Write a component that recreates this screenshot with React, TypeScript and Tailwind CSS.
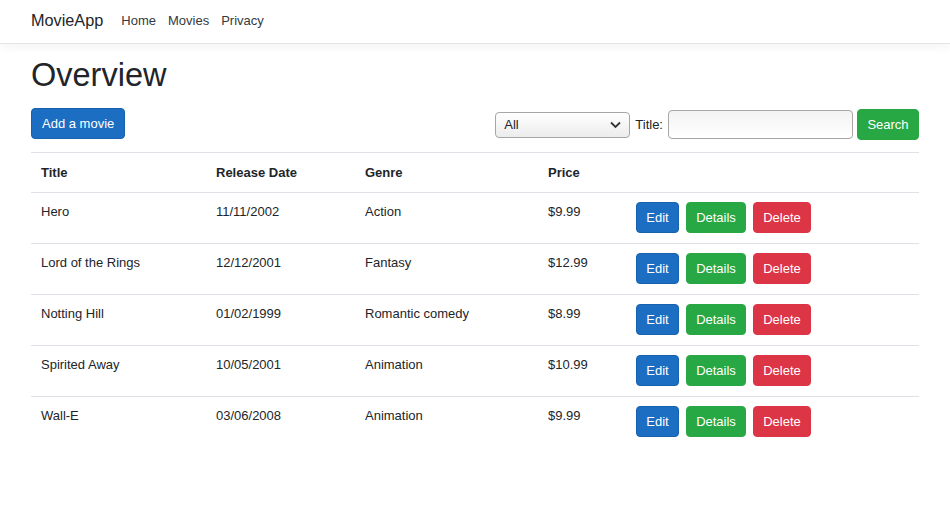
import React from "react";

const movies = [
  { title: "Hero", date: "11/11/2002", genre: "Action", price: "$9.99" },
  { title: "Lord of the Rings", date: "12/12/2001", genre: "Fantasy", price: "$12.99" },
  { title: "Notting Hill", date: "01/02/1999", genre: "Romantic comedy", price: "$8.99" },
  { title: "Spirited Away", date: "10/05/2001", genre: "Animation", price: "$10.99" },
  { title: "Wall-E", date: "03/06/2008", genre: "Animation", price: "$9.99" },
];

const grid = "grid grid-cols-[175px_149px_183px_88px_1fr]";

export default function App() {
  return (
    <div className="min-h-[511px] bg-white text-[#212529] font-['Liberation_Sans',Arial,sans-serif] text-[13px] leading-[19.5px]">
      <nav className="h-[44px] border-b border-[#e5e5e5] shadow-[0_3px_10px_rgba(0,0,0,0.05)] flex items-center pb-[1px] px-[31px]">
        <span className="text-[16.25px] text-[#212529] mr-[12px]">MovieApp</span>
        <a className="px-[6px] text-[#343a40]">Home</a>
        <a className="px-[6px] text-[#343a40]">Movies</a>
        <a className="px-[6px] text-[#343a40]">Privacy</a>
      </nav>
      <main className="px-[31px]">
        <h1 className="text-[32.5px] leading-[39px] mt-[12px] font-normal">Overview</h1>
        <div className="flex justify-between items-start mt-[13px]">
          <button className="h-[31px] px-[10px] rounded-[4px] bg-[#1b6ec2] border border-[#1861ac] text-white">
            Add a movie
          </button>
          <div className="flex items-center pt-[1px]">
            <div className="relative">
              <select className="appearance-none w-[135px] h-[26px] pl-[8px] rounded-[4px] border border-[#a6a6a6] bg-gradient-to-b from-white to-[#ececec] text-[13px] text-[#212529] outline-none">
                <option>All</option>
              </select>
              <svg className="absolute right-[9px] top-[9px] pointer-events-none" width="11" height="8" viewBox="0 0 11 8">
                <path d="M1 1.5 L5.5 6 L10 1.5" fill="none" stroke="#333" strokeWidth="1.8" />
              </svg>
            </div>
            <label className="ml-[5px] mr-[5px]">Title:</label>
            <input className="w-[185px] h-[29px] rounded-[4px] border border-[#a6a6a6] bg-gradient-to-b from-[#f3f3f3] to-white outline-none" />
            <button className="ml-[4px] h-[31px] w-[62px] rounded-[4px] bg-[#28a745] border border-[#28a745] text-white">
              Search
            </button>
          </div>
        </div>
        <div className="mt-[12px] border-t border-[#dee2e6]">
          <div className={`${grid} h-[40px] items-center font-bold border-b border-[#dee2e6]`}>
            <div className="px-[10px]">Title</div>
            <div className="px-[10px]">Release Date</div>
            <div className="px-[10px]">Genre</div>
            <div className="px-[10px]">Price</div>
            <div className="px-[10px]"></div>
          </div>
          {movies.map((m) => (
            <div key={m.title} className={`${grid} h-[51px] border-b border-[#dee2e6] last:border-b-0`}>
              <div className="px-[10px] pt-[9px]">{m.title}</div>
              <div className="px-[10px] pt-[9px]">{m.date}</div>
              <div className="px-[10px] pt-[9px]">{m.genre}</div>
              <div className="px-[10px] pt-[9px]">{m.price}</div>
              <div className="px-[10px] pt-[9px] flex gap-[7px] items-start">
                <button className="h-[31px] w-[43px] rounded-[4px] bg-[#1b6ec2] border border-[#1861ac] text-white">Edit</button>
                <button className="h-[31px] w-[60px] rounded-[4px] bg-[#28a745] border border-[#28a745] text-white">Details</button>
                <button className="h-[31px] w-[58px] rounded-[4px] bg-[#dc3545] border border-[#dc3545] text-white">Delete</button>
              </div>
            </div>
          ))}
        </div>
      </main>
    </div>
  );
}
